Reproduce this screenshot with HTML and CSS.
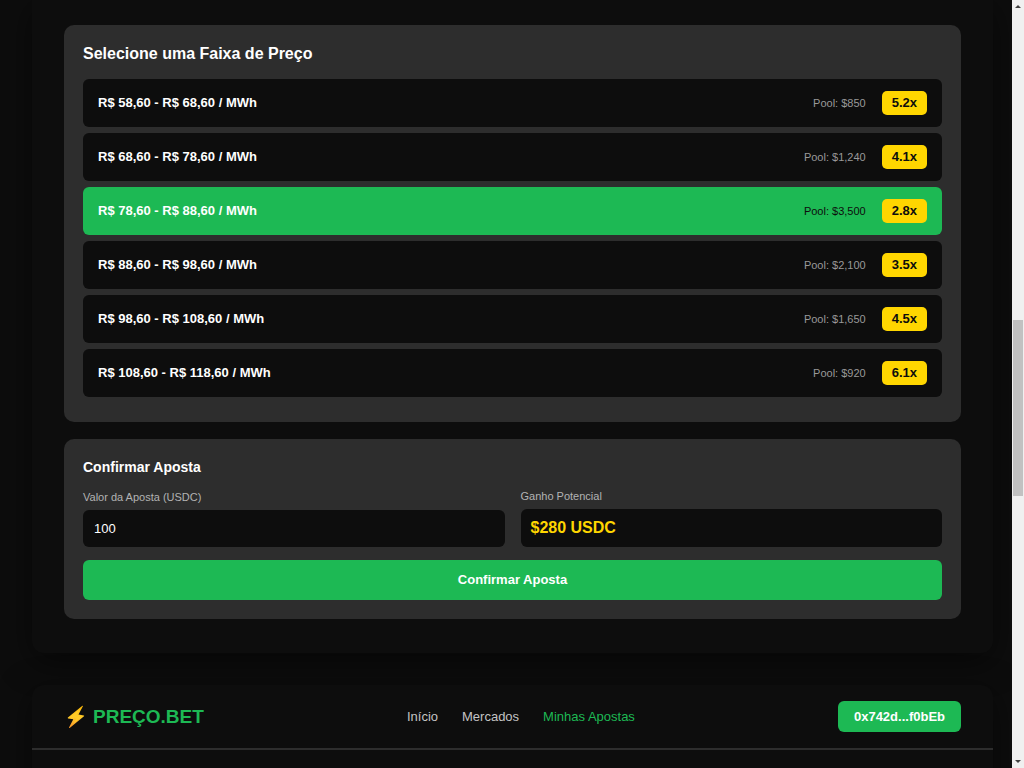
FILE: index.html
```html
<!DOCTYPE html>
<html lang="pt-BR">
<head>
<meta charset="utf-8">
<title>PREÇO.BET</title>
<link rel="stylesheet" href="styles.css">
</head>
<body>
<div class="viewport">
  <main class="page">
    <section class="screen screen-bet">
      <div class="card">
        <h2 class="card-title">Selecione uma Faixa de Preço</h2>
        <button type="button" class="range"><span class="range-label">R$ 58,60 - R$ 68,60 / MWh</span><span class="pool">Pool: $850</span><span class="odds">5.2x</span></button>
        <button type="button" class="range"><span class="range-label">R$ 68,60 - R$ 78,60 / MWh</span><span class="pool">Pool: $1,240</span><span class="odds">4.1x</span></button>
        <button type="button" class="range selected" aria-pressed="true"><span class="range-label">R$ 78,60 - R$ 88,60 / MWh</span><span class="pool">Pool: $3,500</span><span class="odds">2.8x</span></button>
        <button type="button" class="range"><span class="range-label">R$ 88,60 - R$ 98,60 / MWh</span><span class="pool">Pool: $2,100</span><span class="odds">3.5x</span></button>
        <button type="button" class="range"><span class="range-label">R$ 98,60 - R$ 108,60 / MWh</span><span class="pool">Pool: $1,650</span><span class="odds">4.5x</span></button>
        <button type="button" class="range"><span class="range-label">R$ 108,60 - R$ 118,60 / MWh</span><span class="pool">Pool: $920</span><span class="odds">6.1x</span></button>
      </div>
      <form class="card">
        <h3 class="form-title">Confirmar Aposta</h3>
        <div class="fields">
          <div class="field">
            <label class="field-label" for="amount">Valor da Aposta (USDC)</label>
            <input class="amount" id="amount" type="text" inputmode="decimal" value="100">
          </div>
          <div class="field">
            <label class="field-label" for="gain">Ganho Potencial</label>
            <output class="gain" id="gain" for="amount">$280 USDC</output>
          </div>
        </div>
        <button type="button" class="confirm">Confirmar Aposta</button>
      </form>
    </section>
    <section class="screen screen-next">
      <header class="topbar">
        <div class="logo">
          <svg class="bolt" viewBox="0 0 24 24" aria-hidden="true">
            <defs><linearGradient id="bolt-fill" x1="0" y1="0" x2="0" y2="1"><stop offset="0" stop-color="#feb804"/><stop offset="0.5" stop-color="#ffca28"/><stop offset="1" stop-color="#f79329"/></linearGradient></defs>
            <path d="M18.4 .8 3.9 12.6q-.5.6.2.8l5.2.9L5 22.6q-.1.8.7.3L20 11.2q.5-.6-.2-.8l-5.3-.9 4.4-8.2q.1-.8-.5-.5z" fill="url(#bolt-fill)"/>
            <path d="M17 3.2 12.4 10.3l6.2.9L9.2 18.6l3.4-5.3-6.5-.9z" fill="#ffca28"/>
          </svg>
          <span>PREÇO.BET</span>
        </div>
        <nav class="nav">
          <a href="#inicio">Início</a>
          <a href="#mercados">Mercados</a>
          <a class="active" href="#apostas">Minhas Apostas</a>
        </nav>
        <button type="button" class="wallet">0x742d...f0bEb</button>
      </header>
    </section>
  </main>
  <div class="scrollbar" aria-hidden="true">
    <svg class="arrow" viewBox="0 0 12 12"><path d="M6 5 9 8H3z"/></svg>
    <div class="track"><div class="thumb"></div></div>
    <svg class="arrow" viewBox="0 0 12 12"><path d="M3 4h6L6 7z"/></svg>
  </div>
</div>
</body>
</html>
```

FILE: styles.css
```css
* {
  box-sizing: border-box;
}

body {
  margin: 0;
  background: #0d0d0d;
  color: #fff;
  font-family: "Liberation Sans", Arial, sans-serif;
  font-size: 13px;
}

button,
input {
  font: inherit;
  color: inherit;
  border: 0;
}

button {
  cursor: pointer;
}

.viewport {
  display: flex;
  height: 100vh;
  overflow: hidden;
}

.page {
  flex: 1;
  display: flex;
  flex-direction: column;
  gap: 32px;
  min-width: 0;
  padding: 0 19px 0 32px;
  overflow: hidden;
}

.screen {
  flex-shrink: 0;
  background: #0d0d0d;
  box-shadow: 0 8px 32px rgba(0, 0, 0, 0.5);
}

.screen-bet {
  display: flex;
  flex-direction: column;
  gap: 17px;
  padding: 25px 32px 34px;
  border-radius: 0 0 12px 12px;
}

.screen-next {
  min-height: 400px;
  border-radius: 12px;
}

.card {
  padding: 19px;
  background: #2d2d2d;
  border-radius: 10px;
}

.card-title {
  margin: 0 0 15px;
  font-size: 16px;
  line-height: 20px;
}

.range {
  display: flex;
  align-items: center;
  gap: 16px;
  width: 100%;
  margin-bottom: 6px;
  padding: 12px 15px;
  background: #0d0d0d;
  border-radius: 6px;
  line-height: 24px;
  text-align: left;
}

.range-label {
  flex: 1;
  font-weight: 700;
}

.pool {
  color: #999;
  font-size: 11px;
}

.odds {
  padding: 0 10px;
  background: #ffd600;
  border-radius: 5px;
  color: #0d0d0d;
  font-weight: 700;
}

.selected {
  background: #1db954;
}

.selected .pool {
  color: #0d0d0d;
}

.form-title {
  margin: 0 0 12px;
  font-size: 14px;
  line-height: 18px;
}

.fields {
  display: grid;
  grid-template-columns: 1fr 1fr;
  align-items: end;
  gap: 16px;
  margin-bottom: 13px;
}

.field-label {
  display: block;
  margin-bottom: 5px;
  color: #b3b3b3;
  font-size: 11px;
  line-height: 16px;
}

.amount,
.gain {
  display: block;
  width: 100%;
  background: #0d0d0d;
  border-radius: 6px;
}

.amount {
  height: 37px;
  padding: 0 11px;
}

.gain {
  padding: 8px 10px;
  color: #ffd600;
  font-size: 16px;
  font-weight: 700;
  line-height: 22px;
}

.confirm {
  display: block;
  width: 100%;
  padding: 10px;
  background: #1db954;
  border-radius: 6px;
  font-weight: 700;
  line-height: 20px;
}

.topbar {
  display: flex;
  align-items: center;
  justify-content: space-between;
  padding: 16px 32px;
  border-bottom: 2px solid #2d2d2d;
}

.logo {
  display: flex;
  align-items: center;
  gap: 5px;
  color: #1db954;
  font-size: 19px;
  font-weight: 700;
}

.bolt {
  width: 24px;
  height: 24px;
}

.nav {
  display: flex;
  gap: 24px;
}

.nav a {
  color: #c4c4c4;
  text-decoration: none;
}

.nav .active {
  color: #1db954;
}

.wallet {
  padding: 6px 16px;
  background: #1db954;
  border-radius: 6px;
  font-weight: 700;
  line-height: 19px;
}

.scrollbar {
  display: flex;
  flex-direction: column;
  width: 12px;
  background: #f0f0f0;
}

.arrow {
  height: 12px;
  fill: #404040;
}

.track {
  flex: 1;
  padding: 0 1px;
}

.thumb {
  height: 176px;
  margin-top: 308px;
  background: #c1c1c1;
}
```
